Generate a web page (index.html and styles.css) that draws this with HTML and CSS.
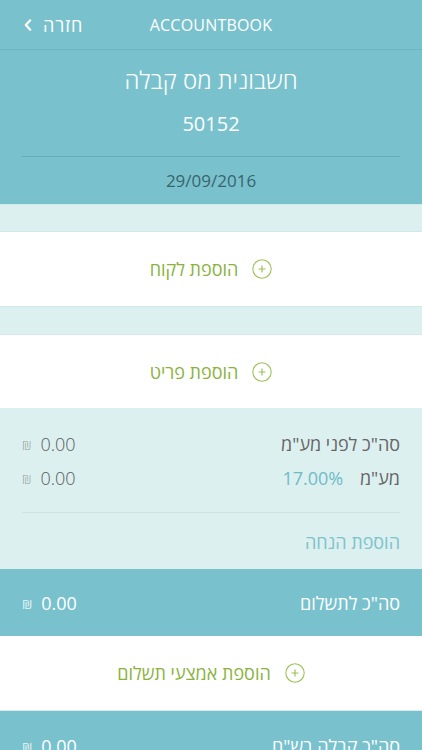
FILE: index.html
```html
<!DOCTYPE html>
<html lang="he" dir="rtl">
<head>
<meta charset="utf-8">
<title>AccountBook</title>
<link rel="stylesheet" href="styles.css">
</head>
<body>
<div class="screen">
  <header class="nav">
    <div class="back"><span class="back-text">חזרה</span><span class="chev"><svg width="8" height="12" viewBox="0 0 8 12"><path d="M6.2 1.3 L1.8 6 L6.2 10.7" fill="none" stroke="#fff" stroke-width="2.2" stroke-linecap="round" stroke-linejoin="round"/></svg></span></div>
    <div class="brand">ACCOUNTBOOK</div>
  </header>
  <section class="doc">
    <div class="doc-title">חשבונית מס קבלה</div>
    <div class="doc-num">50152</div>
    <div class="doc-rule"></div>
    <div class="doc-date">29/09/2016</div>
  </section>
  <div class="band"></div>
  <div class="add-row">
    <span class="plus"><svg width="20" height="20" viewBox="0 0 20 20"><circle cx="10" cy="10" r="9.2" fill="none" stroke="#9cc25a" stroke-width="1.1"/><path d="M10 6.5v7M6.5 10h7" stroke="#9cc25a" stroke-width="1.2"/></svg></span>
    <span class="add-text">הוספת לקוח</span>
  </div>
  <div class="band band-2"></div>
  <div class="add-row add-row-short">
    <span class="plus"><svg width="20" height="20" viewBox="0 0 20 20"><circle cx="10" cy="10" r="9.2" fill="none" stroke="#9cc25a" stroke-width="1.1"/><path d="M10 6.5v7M6.5 10h7" stroke="#9cc25a" stroke-width="1.2"/></svg></span>
    <span class="add-text">הוספת פריט</span>
  </div>
  <section class="totals">
    <div class="trow"><span class="tlabel">סה"כ לפני מע"מ</span><span class="amount" dir="ltr"><span class="shekel">₪</span><span>0.00</span></span></div>
    <div class="trow"><span class="tlabel">מע"מ <span class="rate">17.00%</span></span><span class="amount" dir="ltr"><span class="shekel">₪</span><span>0.00</span></span></div>
    <div class="trule"></div>
    <div class="discount">הוספת הנחה</div>
  </section>
  <div class="sum-row"><span class="sum-label">סה"כ לתשלום</span><span class="amount amount-w" dir="ltr"><span class="shekel shekel-w">₪</span><span>0.00</span></span></div>
  <div class="add-row">
    <span class="plus"><svg width="20" height="20" viewBox="0 0 20 20"><circle cx="10" cy="10" r="9.2" fill="none" stroke="#9cc25a" stroke-width="1.1"/><path d="M10 6.5v7M6.5 10h7" stroke="#9cc25a" stroke-width="1.2"/></svg></span>
    <span class="add-text">הוספת אמצעי תשלום</span>
  </div>
  <div class="sum-row sum-last"><span class="sum-label">סה"כ קבלה בש"ח</span><span class="amount amount-w" dir="ltr"><span class="shekel shekel-w">₪</span><span>0.00</span></span></div>
</div>
</body>
</html>
```
FILE: styles.css
```css
html, body {
  margin: 0;
  padding: 0;
  background: #ffffff;
}
body {
  font-family: "Open Sans", "DejaVu Sans", sans-serif;
  font-weight: 300;
  direction: rtl;
  overflow: hidden;
}
.screen {
  width: 422px;
  height: 750px;
  overflow: hidden;
  position: relative;
}
.nav {
  height: 49px;
  background: #79c2cd;
  border-bottom: 1px solid #6cb4c0;
  display: flex;
  align-items: center;
  position: relative;
}
.back {
  position: absolute;
  left: 24px;
  top: 0;
  height: 49px;
  display: flex;
  align-items: center;
  gap: 11px;
  color: #fff;
  font-size: 18px;
  font-weight: 400;
  letter-spacing: 1px;
}
.chev { display: flex; }
.brand {
  flex: 1;
  text-align: center;
  color: #fff;
  font-size: 16px;
  font-weight: 500;
  letter-spacing: 0.2px;
  direction: ltr;
}
.doc {
  background: #79c2cd;
  padding: 15px 22px 8px;
  text-align: center;
  color: #fff;
}
.doc-title {
  font-size: 24px;
  line-height: 30px;
}
.doc-num {
  font-size: 20px;
  line-height: 30px;
  margin-top: 14px;
  font-weight: 400;
}
.doc-rule {
  height: 1px;
  background: #66adb9;
  margin-top: 17px;
}
.doc-date {
  font-size: 17px;
  line-height: 30px;
  margin-top: 9px;
  color: #3a646c;
  font-weight: 400;
}
.band {
  height: 26px;
  background: #ddf0f0;
  border-top: 1px solid #d2e9ea;
  border-bottom: 1px solid #d2e9ea;
}
.band-2 { height: 27px; }
.add-row {
  height: 74px;
  display: flex;
  align-items: center;
  justify-content: center;
  gap: 14px;
  background: #fff;
}
.add-row-short { height: 73px; }
.plus { display: flex; }
.add-text {
  color: #8ab33e;
  font-size: 18px;
  font-weight: 400;
}
.totals {
  background: #ddf0f0;
  padding: 19px 22px 10px;
  color: #666;
  font-size: 18px;
}
.trow {
  display: flex;
  justify-content: space-between;
  align-items: center;
  height: 34px;
}
.tlabel { font-weight: 400; }
.rate {
  color: #6fbcc8;
  margin-right: 12px;
}
.amount {
  display: flex;
  align-items: center;
  gap: 9px;
  color: #5c5c5c;
}
.shekel {
  font-size: 13px;
  color: #8d9c9c;
  padding-top: 2px;
}
.trule {
  height: 1px;
  background: #cfe3e4;
  margin-top: 17px;
}
.discount {
  color: #7cc3cd;
  height: 34px;
  line-height: 34px;
  margin-top: 12px;
  font-weight: 400;
}
.sum-row {
  height: 67px;
  background: #79c2cd;
  color: #fff;
  font-size: 18px;
  display: flex;
  justify-content: space-between;
  align-items: center;
  padding: 0 22px;
}
.sum-label { font-weight: 400; }
.amount-w { color: #fff; font-weight: 400; }
.shekel-w { color: #e6f4f6; }
.sum-last {
  height: 80px;
  align-items: flex-start;
  padding-top: 23px;
  box-sizing: border-box;
  border-top: 1px solid #d6ecee;
}
```
